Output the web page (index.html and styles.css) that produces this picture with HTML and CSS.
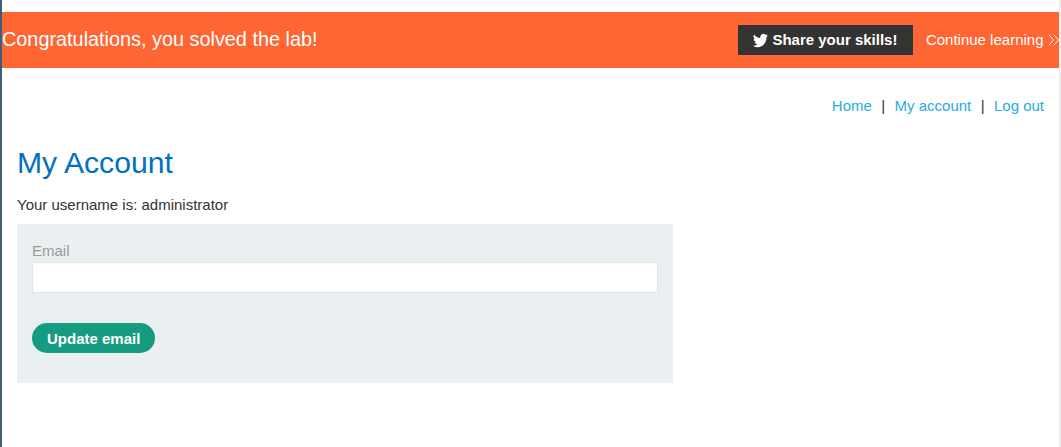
FILE: index.html
```
<!DOCTYPE html>
<html lang="en">
<head>
  <meta charset="UTF-8">
  <meta name="viewport" content="width=device-width, initial-scale=1.0">
  <title>My Account</title>
  <link rel="stylesheet" href="styles.css">
</head>
<body>
  <section class="lab-banner">
    <h4 class="banner-title">Congratulations, you solved the lab!</h4>
    <div class="banner-links">
      <a class="share-button" href="#">
        <svg class="twitter-icon" viewBox="0 1 24 22" width="15" height="15" preserveAspectRatio="none" fill="currentColor">
          <path d="M23.95 4.57a10 10 0 0 1-2.82.77 4.96 4.96 0 0 0 2.16-2.72c-.95.56-2 .96-3.13 1.18a4.92 4.92 0 0 0-8.38 4.48C7.69 8.1 4.07 6.13 1.64 3.16a4.92 4.92 0 0 0 1.52 6.57 4.9 4.9 0 0 1-2.23-.61v.06a4.92 4.92 0 0 0 3.95 4.83 5 5 0 0 1-2.21.08 4.94 4.94 0 0 0 4.6 3.42A9.87 9.87 0 0 1 0 19.54a13.99 13.99 0 0 0 7.55 2.21c9.05 0 14-7.5 14-13.98 0-.21 0-.42-.02-.63a9.94 9.94 0 0 0 2.42-2.57z"/>
        </svg>
        <span>Share your skills!</span>
      </a>
      <a class="continue-link" href="#">
        <span>Continue learning</span>
        <svg class="arrow-icon" viewBox="0 0 11 12" width="11" height="12" fill="none" stroke="currentColor" stroke-width="0.9">
          <path d="M1 0.8 5.6 6 1 11.2M5.8 0.8 10.4 6 5.8 11.2"/>
        </svg>
      </a>
    </div>
  </section>

  <main class="container">
    <nav class="top-links">
      <a href="#">Home</a>
      <span>|</span>
      <a href="#">My account</a>
      <span>|</span>
      <a href="#">Log out</a>
    </nav>
    <h1>My Account</h1>
    <p class="username">Your username is: administrator</p>
    <form class="login-form">
      <label for="email">Email</label>
      <input type="email" id="email" name="email">
      <button class="button" type="submit">Update email</button>
    </form>
  </main>
</body>
</html>
```
FILE: styles.css
```
* {
  box-sizing: border-box;
}

body {
  min-height: 100vh;
  margin: 0;
  padding-top: 12px;
  border-left: 2px solid #3f5d7d;
  border-right: 2px solid #f0f0f0;
  background-color: #fff;
  color: #333332;
  font-family: Arial, "Liberation Sans", sans-serif;
  font-size: 15px;
  line-height: 17px;
  overflow: hidden;
}

a {
  color: #29abe2;
  text-decoration: none;
}

.lab-banner {
  display: flex;
  align-items: center;
  justify-content: space-between;
  height: 56px;
  background-color: #ff6633;
}

.banner-title {
  margin: 0;
  padding-bottom: 2px;
  color: #fff;
  font-size: 19.85px;
  font-weight: normal;
  line-height: 24px;
}

.banner-links {
  display: flex;
  align-items: center;
  gap: 13px;
}

.share-button {
  display: flex;
  align-items: center;
  width: 175px;
  height: 30px;
  padding-left: 15px;
  gap: 4.5px;
  background-color: #333332;
  color: #fff;
  font-weight: bold;
}

.share-button span,
.continue-link span {
  padding-bottom: 2px;
}

.continue-link {
  display: flex;
  align-items: center;
  gap: 4.5px;
  color: #fff;
}

.container {
  padding: 29px 15px 0;
}

.top-links {
  display: flex;
  justify-content: flex-end;
  gap: 9.4px;
}

h1 {
  margin: 30px 0 0;
  color: #0071bc;
  font-size: 30.15px;
  font-weight: normal;
  line-height: 38px;
}

.username {
  margin: 14px 0 11px;
}

.login-form {
  width: 656px;
  height: 159px;
  padding: 18px 15px 0;
  background-color: #eaeff2;
}

.login-form label {
  display: block;
  color: #999;
}

.login-form input {
  display: block;
  width: 100%;
  height: 31px;
  margin: 3px 0 30px;
  padding: 0 10px;
  border: 1px solid #e4e4e4;
  border-radius: 2px;
  background-color: #fff;
  font: inherit;
}

.button {
  display: block;
  height: 30px;
  padding: 0 15px;
  border: none;
  border-radius: 15px;
  background-color: #159c80;
  color: #fff;
  font: inherit;
  font-weight: bold;
  cursor: pointer;
}
```
